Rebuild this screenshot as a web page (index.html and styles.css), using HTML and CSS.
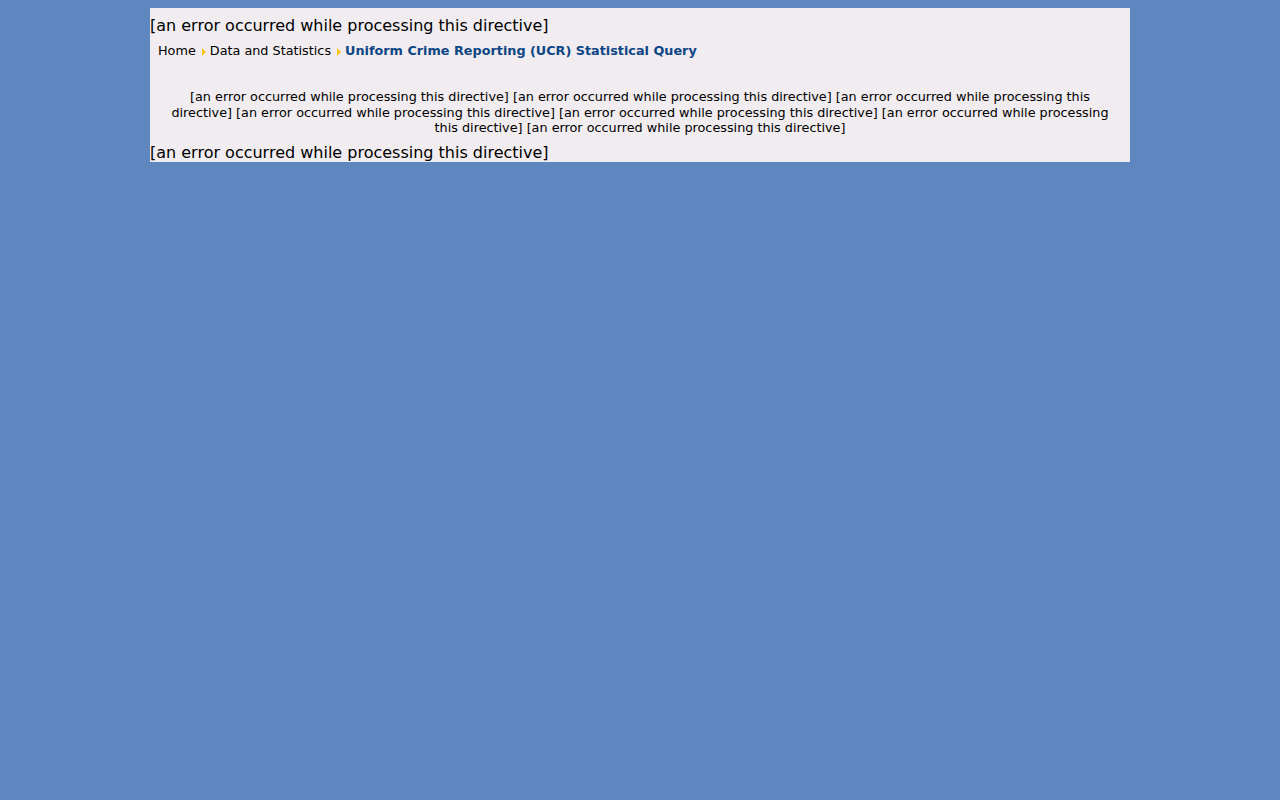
FILE: index.html
```html
<!DOCTYPE html>
<html>
<head>
<meta charset="utf-8">
<title>Uniform Crime Reporting (UCR) Statistical Query</title>
<link rel="stylesheet" href="styles.css">
</head>
<body>
<div class="page">
  <div class="ssi">[an error occurred while processing this directive]</div>
  <div class="crumbs">
    <a class="crumb" href="#">Home</a><span class="arrow"></span><a class="crumb" href="#">Data and Statistics</a><span class="arrow"></span><span class="current">Uniform Crime Reporting (UCR) Statistical Query</span>
  </div>
  <div class="content">[an error occurred while processing this directive] [an error occurred while processing this directive] [an error occurred while processing this directive] [an error occurred while processing this directive] [an error occurred while processing this directive] [an error occurred while processing this directive] [an error occurred while processing this directive]</div>
  <div class="ssi">[an error occurred while processing this directive]</div>
</div>
</body>
</html>
```
FILE: styles.css
```css
html, body {
  background: #5f87bf;
}
body {
  margin: 8px;
  font-family: "DejaVu Sans", sans-serif;
  color: #000;
}
.page {
  width: 980px;
  margin: 0 auto;
  padding-top: 8px;
  background: #f0ecef;
}
.ssi {
  font-size: 16px;
  line-height: 19px;
}
.crumbs {
  font-size: 12.8px;
  line-height: 16px;
  padding: 8px 8px 0;
  height: 54px;
  box-sizing: border-box;
}
.crumb {
  color: #000;
  text-decoration: none;
}
.arrow {
  display: inline-block;
  width: 0;
  height: 0;
  border-top: 4px solid transparent;
  border-bottom: 4px solid transparent;
  border-left: 4px solid #f5c518;
  margin: 0 4px 0 6px;
  vertical-align: -1px;
}
.current {
  color: #0e4585;
  font-weight: bold;
}
.content {
  font-size: 12.8px;
  line-height: 15.5px;
  text-align: center;
  padding: 0 20px 7px;
}
```
